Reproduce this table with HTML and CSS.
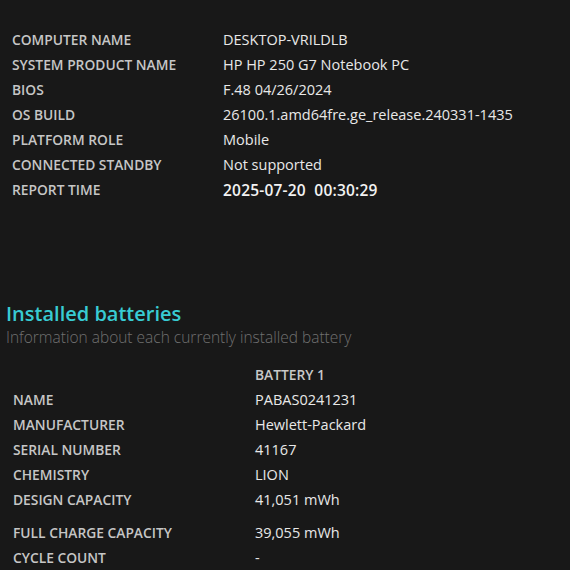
FILE: index.html
```html
<!DOCTYPE html>
<html>
<head>
<meta charset="utf-8">
<link rel="stylesheet" href="styles.css">
</head>
<body>
<section class="info">
  <div class="row"><span class="label">COMPUTER NAME</span><span class="value">DESKTOP-VRILDLB</span></div>
  <div class="row"><span class="label">SYSTEM PRODUCT NAME</span><span class="value">HP HP 250 G7 Notebook PC</span></div>
  <div class="row"><span class="label">BIOS</span><span class="value">F.48 04/26/2024</span></div>
  <div class="row"><span class="label">OS BUILD</span><span class="value">26100.1.amd64fre.ge_release.240331-1435</span></div>
  <div class="row"><span class="label">PLATFORM ROLE</span><span class="value">Mobile</span></div>
  <div class="row"><span class="label">CONNECTED STANDBY</span><span class="value">Not supported</span></div>
  <div class="row"><span class="label">REPORT TIME</span><span class="value strong">2025-07-20&nbsp;&nbsp;00:30:29</span></div>
</section>

<header class="section-head">
  <h2 class="title">Installed batteries</h2>
  <p class="subtitle">Information about each currently installed battery</p>
</header>

<section class="batteries">
  <div class="row"><span class="label"></span><span class="label col-head">BATTERY 1</span></div>
  <div class="row"><span class="label">NAME</span><span class="value">PABAS0241231</span></div>
  <div class="row"><span class="label">MANUFACTURER</span><span class="value">Hewlett-Packard</span></div>
  <div class="row"><span class="label">SERIAL NUMBER</span><span class="value">41167</span></div>
  <div class="row"><span class="label">CHEMISTRY</span><span class="value">LION</span></div>
  <div class="row gap-after"><span class="label">DESIGN CAPACITY</span><span class="value">41,051 mWh</span></div>
  <div class="row"><span class="label">FULL CHARGE CAPACITY</span><span class="value">39,055 mWh</span></div>
  <div class="row"><span class="label">CYCLE COUNT</span><span class="value">-</span></div>
</section>
</body>
</html>
```
FILE: styles.css
```css
html, body {
  margin: 0;
  padding: 0;
  background: #181818;
}
body {
  font-family: "Open Sans", "Noto Sans", sans-serif;
  color: #e6e6e6;
  width: 570px;
  height: 570px;
  overflow: hidden;
}
.info {
  padding: 27px 0 0 12px;
}
.row {
  display: grid;
  grid-template-columns: 211px 1fr;
  height: 25px;
  align-items: center;
  white-space: nowrap;
}
.label {
  font-size: 13.8px;
  font-weight: 600;
  color: #c6c6c6;
}
.value {
  font-size: 14.5px;
  font-weight: 400;
  color: #e8e8e8;
}
.value.strong {
  font-size: 15.5px;
  font-weight: 600;
  letter-spacing: 0.2px;
  color: #f2f2f2;
}
.section-head {
  padding: 0 0 0 6px;
  margin-top: 99px;
}
.title {
  margin: 0;
  font-size: 20px;
  line-height: 26px;
  font-weight: 600;
  color: #38cbd3;
}
.subtitle {
  margin: 0;
  font-size: 15.5px;
  line-height: 20px;
  font-weight: 300;
  color: #707070;
}
.batteries {
  padding: 15px 0 0 13px;
}
.batteries .row {
  grid-template-columns: 242px 1fr;
}
.col-head {
  color: #c8c8c8;
}
.gap-after {
  margin-bottom: 8px;
}
```
